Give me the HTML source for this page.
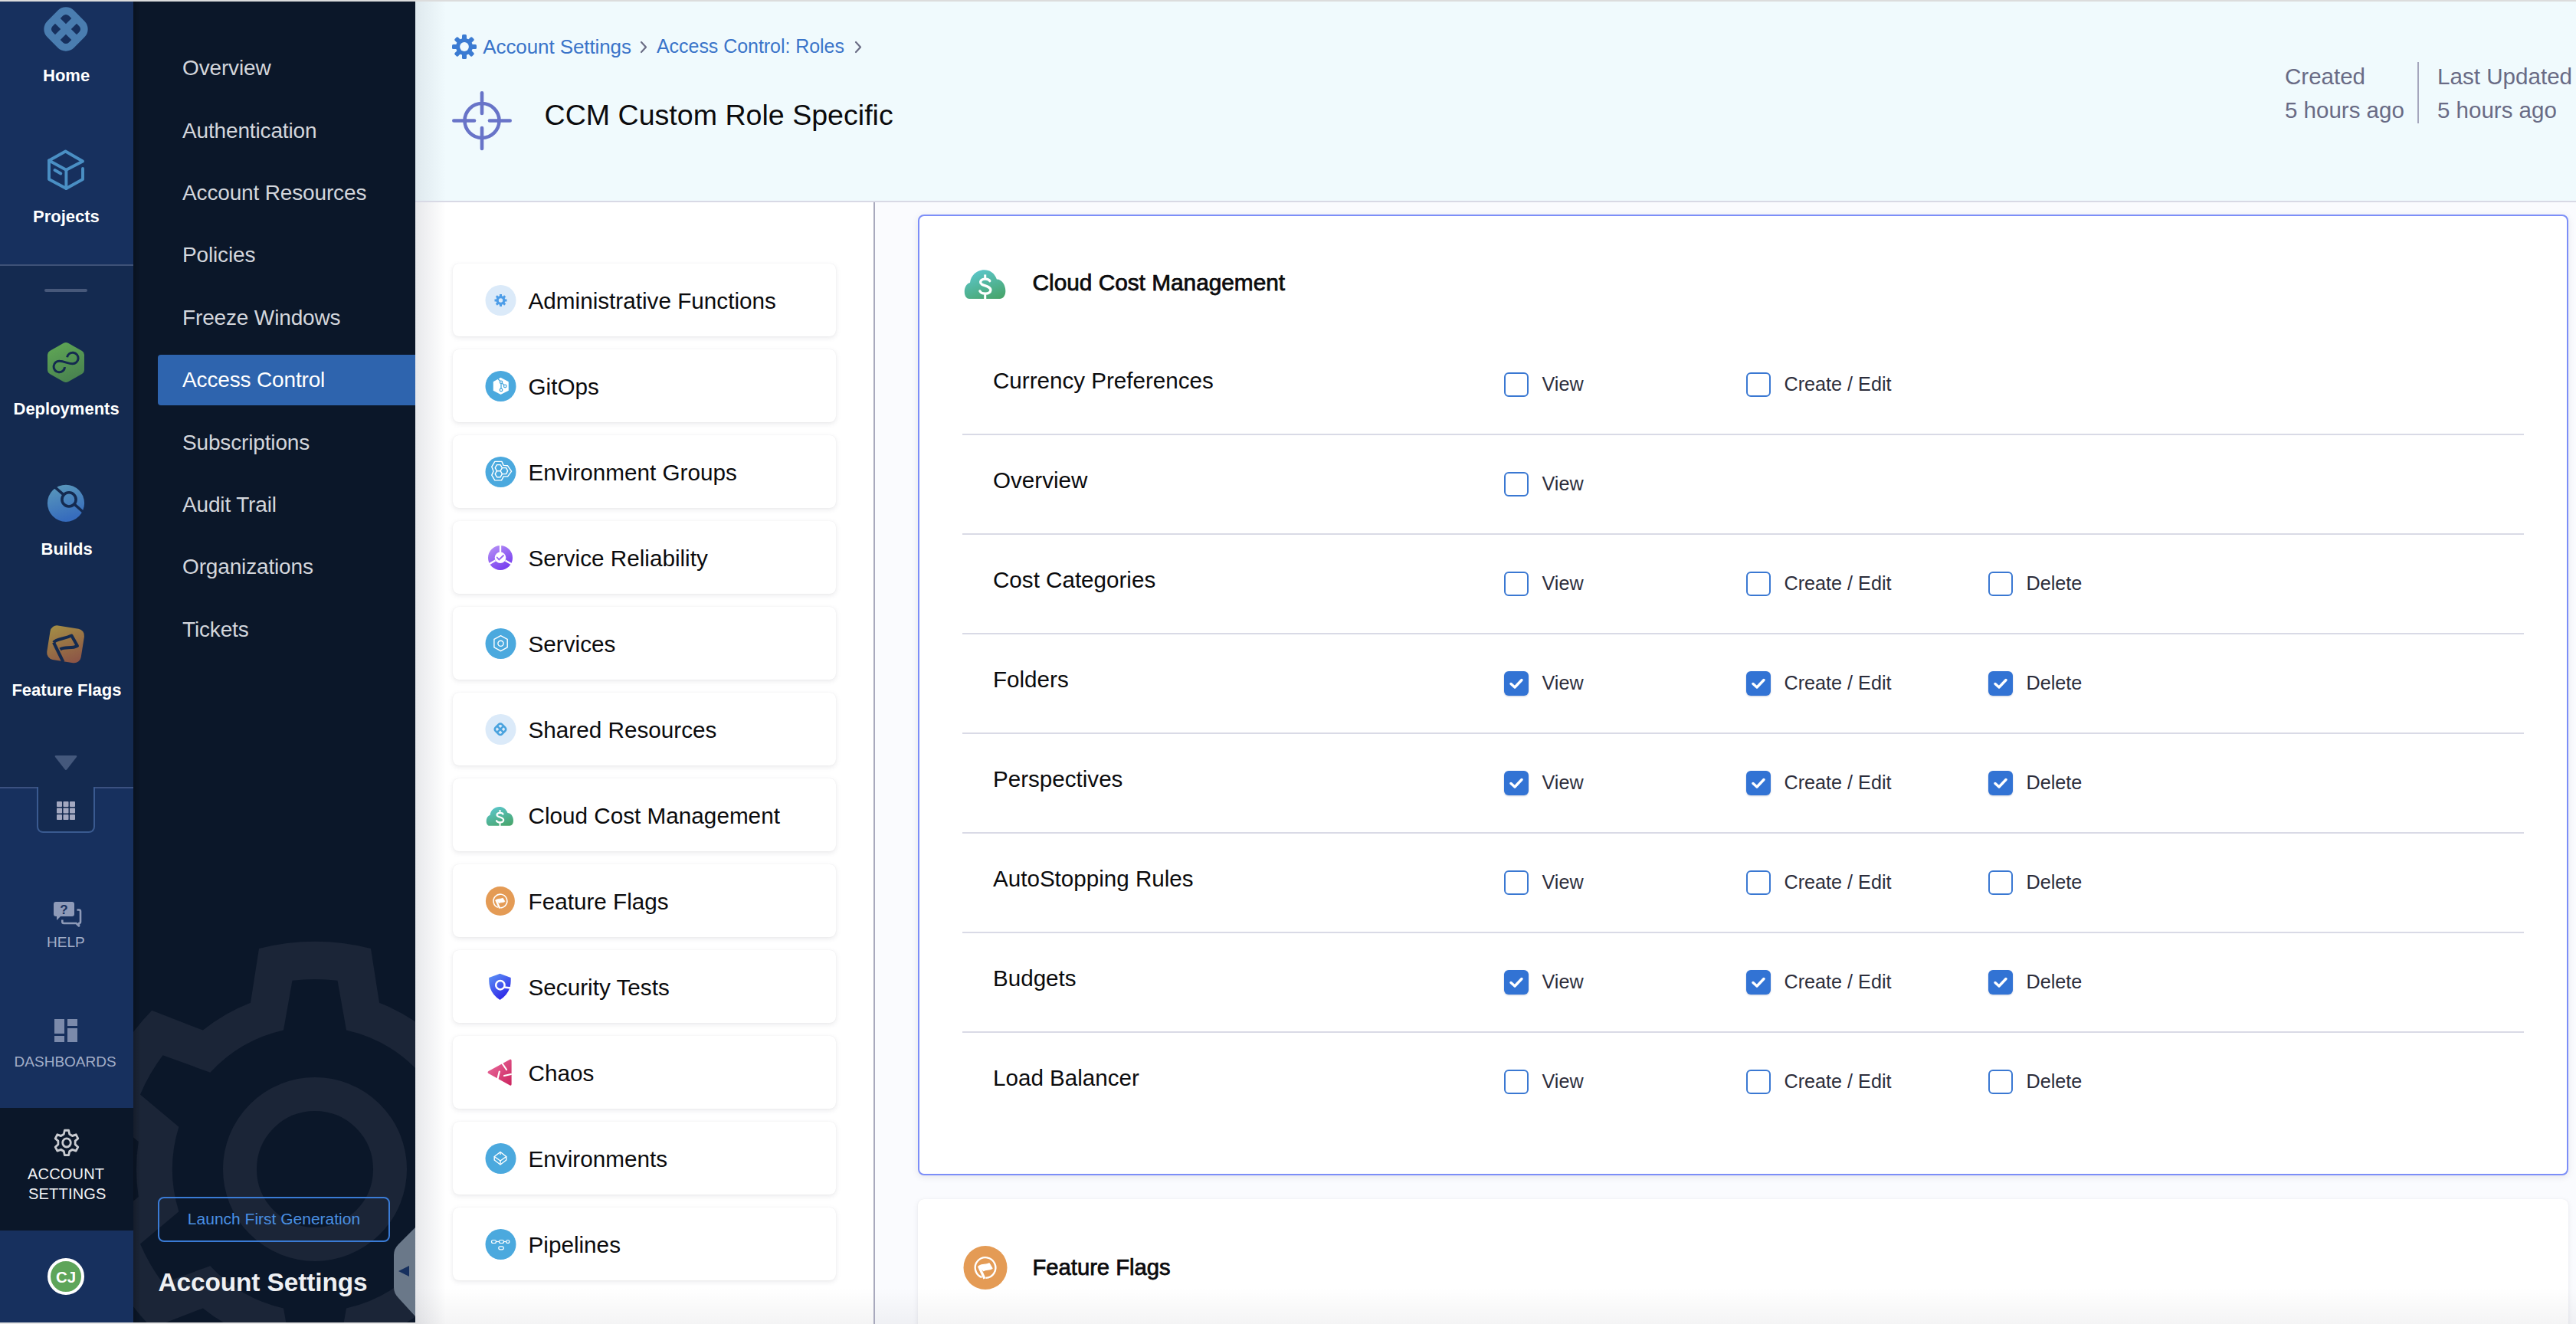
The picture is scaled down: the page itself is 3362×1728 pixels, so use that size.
<!DOCTYPE html>
<html><head><meta charset="utf-8"><title>CCM Custom Role Specific</title>
<style>
html,body{margin:0;padding:0;}
body{width:3362px;height:1728px;position:relative;overflow:hidden;background:#fff;font-family:"Liberation Sans",sans-serif;}
.t{position:absolute;white-space:nowrap;}
.r{position:absolute;display:block;}
</style></head><body>
<div class="r" style="left:542px;top:0px;width:2820px;height:262px;background:#f0fafd"></div>
<div class="r" style="left:542px;top:262px;width:2820px;height:2px;background:#d8d9e5"></div>
<svg class="r" style="left:590px;top:45px;" width="32" height="32" viewBox="0 0 32 32" ><g fill="#3b7bd2"><circle cx="16" cy="16" r="11"/><rect x="13" y="0" width="6" height="9" rx="1.6" transform="rotate(0 16 16)"/><rect x="13" y="0" width="6" height="9" rx="1.6" transform="rotate(45 16 16)"/><rect x="13" y="0" width="6" height="9" rx="1.6" transform="rotate(90 16 16)"/><rect x="13" y="0" width="6" height="9" rx="1.6" transform="rotate(135 16 16)"/><rect x="13" y="0" width="6" height="9" rx="1.6" transform="rotate(180 16 16)"/><rect x="13" y="0" width="6" height="9" rx="1.6" transform="rotate(225 16 16)"/><rect x="13" y="0" width="6" height="9" rx="1.6" transform="rotate(270 16 16)"/><rect x="13" y="0" width="6" height="9" rx="1.6" transform="rotate(315 16 16)"/></g><circle cx="16" cy="16" r="5.9" fill="#f0fafd"/></svg>
<div class="t " style="left:630.3px;top:47.5px;font-size:26px;line-height:26px;color:#3a74c9;font-weight:400;letter-spacing:-0.1px">Account Settings</div>
<svg class="r" style="left:835px;top:52.5px;" width="11" height="17" viewBox="0 0 11 17" ><path d="M2 2 L8 8.5 L2 15" fill="none" stroke="#6b6d85" stroke-width="2.2" stroke-linecap="round" stroke-linejoin="round"/></svg>
<div class="t " style="left:857.0px;top:48.3px;font-size:25px;line-height:25px;color:#3a74c9;font-weight:400;letter-spacing:-0.05px">Access Control: Roles</div>
<svg class="r" style="left:1115px;top:52.5px;" width="11" height="17" viewBox="0 0 11 17" ><path d="M2 2 L8 8.5 L2 15" fill="none" stroke="#6b6d85" stroke-width="2.2" stroke-linecap="round" stroke-linejoin="round"/></svg>
<svg class="r" style="left:590px;top:119px;" width="78" height="78" viewBox="0 0 78 78" ><g fill="none" stroke="#6874c8" stroke-width="4.6" stroke-linecap="round"><circle cx="39" cy="38.5" r="22.5"/><line x1="2.3" y1="38.5" x2="29" y2="38.5"/><line x1="49" y1="38.5" x2="75.7" y2="38.5"/><line x1="39" y1="2.3" x2="39" y2="29"/><line x1="39" y1="48" x2="39" y2="75"/></g></svg>
<div class="t " style="left:710.5px;top:132.2px;font-size:37.6px;line-height:37.6px;color:#0b0b0d;font-weight:400;">CCM Custom Role Specific</div>
<div class="t " style="left:2982.0px;top:85.0px;font-size:29.5px;line-height:29.5px;color:#696b85;font-weight:400;">Created</div>
<div class="t " style="left:2982.0px;top:128.5px;font-size:29.5px;line-height:29.5px;color:#696b85;font-weight:400;">5 hours ago</div>
<div class="r" style="left:3155px;top:81px;width:2px;height:80px;background:#a5a6bc"></div>
<div class="t " style="left:3181.0px;top:84.9px;font-size:29.6px;line-height:29.6px;color:#696b85;font-weight:400;">Last Updated</div>
<div class="t " style="left:3181.0px;top:128.5px;font-size:29.5px;line-height:29.5px;color:#696b85;font-weight:400;">5 hours ago</div>
<div class="r" style="left:542px;top:264px;width:598px;height:1464px;background:#fff"></div>
<div class="r" style="left:542px;top:264px;width:40px;height:1464px;background:linear-gradient(to right, rgba(20,30,60,0.10), rgba(20,30,60,0))"></div>
<div class="r" style="left:542px;top:0px;width:40px;height:262px;background:linear-gradient(to right, rgba(20,30,60,0.08), rgba(20,30,60,0))"></div>
<div class="r" style="left:591px;top:344px;width:500px;height:95px;background:#fff;border-radius:8px;box-shadow:0 0 1px rgba(40,41,61,0.10),0 2px 6px rgba(96,97,112,0.14)"></div>
<svg class="r" style="left:625px;top:363px;" width="60" height="60" viewBox="0 0 60 60" ><circle cx="28.5" cy="29" r="20" fill="#dbeaf9"/><g fill="#4d9de8"><circle cx="28.5" cy="29" r="6"/><rect x="27" y="21" width="3" height="4.5" transform="rotate(0 28.5 29)"/><rect x="27" y="21" width="3" height="4.5" transform="rotate(45 28.5 29)"/><rect x="27" y="21" width="3" height="4.5" transform="rotate(90 28.5 29)"/><rect x="27" y="21" width="3" height="4.5" transform="rotate(135 28.5 29)"/><rect x="27" y="21" width="3" height="4.5" transform="rotate(180 28.5 29)"/><rect x="27" y="21" width="3" height="4.5" transform="rotate(225 28.5 29)"/><rect x="27" y="21" width="3" height="4.5" transform="rotate(270 28.5 29)"/><rect x="27" y="21" width="3" height="4.5" transform="rotate(315 28.5 29)"/></g><circle cx="28.5" cy="29" r="2.7" fill="#dbeaf9"/></svg>
<div class="t " style="left:689.5px;top:377.7px;font-size:29.7px;line-height:29.7px;color:#0b0b0d;font-weight:400;">Administrative Functions</div>
<div class="r" style="left:591px;top:456px;width:500px;height:95px;background:#fff;border-radius:8px;box-shadow:0 0 1px rgba(40,41,61,0.10),0 2px 6px rgba(96,97,112,0.14)"></div>
<svg class="r" style="left:625px;top:475px;" width="60" height="60" viewBox="0 0 60 60" ><circle cx="28.5" cy="29" r="20" fill="#4ba9de"/><path d="M28.5 18.6 L38 23.6 L38 34.4 L28.5 39 L19.5 34.4 L19.5 23.6 Z" fill="#fff" stroke="#fff" stroke-width="1.5" stroke-linejoin="round"/><g stroke="#4ba9de" stroke-width="1.3" fill="#fff"><path d="M25 19.5 L29 23.8 L34.2 29 M29 23.8 L29 34" fill="none"/><circle cx="29" cy="23.8" r="1.7"/><circle cx="34.2" cy="29" r="1.8"/><circle cx="29" cy="34" r="1.8"/></g></svg>
<div class="t " style="left:689.5px;top:489.7px;font-size:29.7px;line-height:29.7px;color:#0b0b0d;font-weight:400;">GitOps</div>
<div class="r" style="left:591px;top:568px;width:500px;height:95px;background:#fff;border-radius:8px;box-shadow:0 0 1px rgba(40,41,61,0.10),0 2px 6px rgba(96,97,112,0.14)"></div>
<svg class="r" style="left:625px;top:587px;" width="60" height="60" viewBox="0 0 60 60" ><circle cx="28.5" cy="29" r="20" fill="#4ba9de"/><g fill="none" stroke="#fff" stroke-width="1.4" stroke-linejoin="round"><path d="M20.8 15.4 L29.9 15.4 L32.2 20.4 L37.6 20.8 L42.6 28.1 L37.6 34.9 L32.2 34.9 L29.5 39.9 L20.8 39.9 L16.8 33.1 L19 28.1 L16.8 22.2 Z"/><path d="M23.5 19.6 L28.1 19.6 L30.4 23.6 L28.1 27.6 L23.5 27.6 L21.2 23.6 Z"/><path d="M23.5 27.6 L28.1 27.6 L30.4 31.7 L28.1 35.7 L23.5 35.7 L21.2 31.7 Z"/><path d="M30.4 23.6 L35.6 23.6 L37.6 27.6 L35.6 31.6 L30.4 31.6"/></g></svg>
<div class="t " style="left:689.5px;top:601.7px;font-size:29.7px;line-height:29.7px;color:#0b0b0d;font-weight:400;">Environment Groups</div>
<div class="r" style="left:591px;top:680px;width:500px;height:95px;background:#fff;border-radius:8px;box-shadow:0 0 1px rgba(40,41,61,0.10),0 2px 6px rgba(96,97,112,0.14)"></div>
<svg class="r" style="left:625px;top:699px;" width="60" height="60" viewBox="0 0 60 60" ><defs><linearGradient id="gsrm" x1="0.2" y1="0" x2="0.8" y2="1"><stop offset="0" stop-color="#b48ef5"/><stop offset="1" stop-color="#7338ef"/></linearGradient></defs><circle cx="28" cy="29" r="16" fill="url(#gsrm)"/><circle cx="28" cy="28.8" r="7.3" fill="#fff"/><g stroke="#fff" stroke-width="2.4"><line x1="28" y1="11" x2="28" y2="22"/><line x1="21.5" y1="32.5" x2="12" y2="38"/><line x1="34.5" y1="32.5" x2="44" y2="38"/></g><path d="M23.7 28.5 L26.3 31.4 L32 26" fill="none" stroke="#9566f0" stroke-width="1.8" stroke-linecap="round"/></svg>
<div class="t " style="left:689.5px;top:713.7px;font-size:29.7px;line-height:29.7px;color:#0b0b0d;font-weight:400;">Service Reliability</div>
<div class="r" style="left:591px;top:792px;width:500px;height:95px;background:#fff;border-radius:8px;box-shadow:0 0 1px rgba(40,41,61,0.10),0 2px 6px rgba(96,97,112,0.14)"></div>
<svg class="r" style="left:625px;top:811px;" width="60" height="60" viewBox="0 0 60 60" ><circle cx="28.5" cy="29" r="20" fill="#4ba9de"/><g fill="none" stroke="#fff" stroke-width="1.4" stroke-linejoin="round"><path d="M28.5 18.6 L37.2 23.3 L37.2 33.8 L28.5 38.7 L19.9 33.8 L19.9 23.3 Z"/><circle cx="28.5" cy="28.8" r="3.6"/></g></svg>
<div class="t " style="left:689.5px;top:825.7px;font-size:29.7px;line-height:29.7px;color:#0b0b0d;font-weight:400;">Services</div>
<div class="r" style="left:591px;top:904px;width:500px;height:95px;background:#fff;border-radius:8px;box-shadow:0 0 1px rgba(40,41,61,0.10),0 2px 6px rgba(96,97,112,0.14)"></div>
<svg class="r" style="left:625px;top:923px;" width="60" height="60" viewBox="0 0 60 60" ><circle cx="28.5" cy="29" r="20" fill="#dbeaf9"/><g transform="rotate(45 28 28.8)" fill="none" stroke="#4aa3de" stroke-width="2.6"><rect x="22" y="22.8" width="12" height="12" rx="3"/><line x1="28" y1="22.5" x2="28" y2="35"/><line x1="21.8" y1="28.8" x2="34.2" y2="28.8"/></g></svg>
<div class="t " style="left:689.5px;top:937.7px;font-size:29.7px;line-height:29.7px;color:#0b0b0d;font-weight:400;">Shared Resources</div>
<div class="r" style="left:591px;top:1016px;width:500px;height:95px;background:#fff;border-radius:8px;box-shadow:0 0 1px rgba(40,41,61,0.10),0 2px 6px rgba(96,97,112,0.14)"></div>
<svg class="r" style="left:625px;top:1035px;" width="60" height="60" viewBox="0 0 60 60" ><defs><linearGradient id="gccm" x1="0.3" y1="0" x2="0.8" y2="1"><stop offset="0" stop-color="#5bc6ca"/><stop offset="1" stop-color="#48a56c"/></linearGradient></defs><path d="M14 42.8 C8 42.8 8.5 30 14.5 29 C15.5 17 33 13 37.5 26 C46 26 48 42.8 40 42.8 Z" fill="url(#gccm)"/><path d="M31.5 27.5 C30.5 25.2 24 25 23.5 28.3 C23 32 32.8 31.2 32.2 35.6 C31.6 39.3 24.2 39 23 36.2" fill="none" stroke="#fff" stroke-width="2.2" stroke-linecap="round"/><line x1="27.5" y1="22" x2="27.5" y2="25.5" stroke="#fff" stroke-width="2"/><line x1="27.5" y1="39" x2="27.5" y2="43" stroke="#fff" stroke-width="2"/></svg>
<div class="t " style="left:689.5px;top:1049.7px;font-size:29.7px;line-height:29.7px;color:#0b0b0d;font-weight:400;">Cloud Cost Management</div>
<div class="r" style="left:591px;top:1128px;width:500px;height:95px;background:#fff;border-radius:8px;box-shadow:0 0 1px rgba(40,41,61,0.10),0 2px 6px rgba(96,97,112,0.14)"></div>
<svg class="r" style="left:625px;top:1147px;" width="60" height="60" viewBox="0 0 60 60" ><circle cx="27.9" cy="29" r="19.0" fill="#e49b55"/><path d="M24.86 37.36 A8.90 8.90 0 1 1 28.21 37.89" fill="none" stroke="#fff" stroke-width="1.60"/><path d="M22.20 27.60 C25.00 25.50 28.00 27.00 31.30 25.20 L33.90 29.60 C31.00 31.50 28.50 30.00 26.30 31.80 Z" fill="#fff" stroke="#fff" stroke-width="0.80" stroke-linejoin="round"/><path d="M22.20 27.60 L27.20 38.60" stroke="#fff" stroke-width="2.30"/></svg>
<div class="t " style="left:689.5px;top:1161.7px;font-size:29.7px;line-height:29.7px;color:#0b0b0d;font-weight:400;">Feature Flags</div>
<div class="r" style="left:591px;top:1240px;width:500px;height:95px;background:#fff;border-radius:8px;box-shadow:0 0 1px rgba(40,41,61,0.10),0 2px 6px rgba(96,97,112,0.14)"></div>
<svg class="r" style="left:625px;top:1259px;" width="60" height="60" viewBox="0 0 60 60" ><defs><linearGradient id="gsto" x1="0.2" y1="0" x2="0.8" y2="1"><stop offset="0" stop-color="#5a8ef5"/><stop offset="1" stop-color="#2a1ce6"/></linearGradient></defs><path d="M27.5 11.8 L41.7 17 Q42 26 40 31 Q37 40 27.5 46 Q18 40 15 31 Q13 26 13.2 17 Z" fill="url(#gsto)"/><circle cx="27.9" cy="26.7" r="5.7" fill="none" stroke="#fff" stroke-width="2.5"/><line x1="33" y1="29.5" x2="42" y2="30.5" stroke="#fff" stroke-width="2.5"/></svg>
<div class="t " style="left:689.5px;top:1273.7px;font-size:29.7px;line-height:29.7px;color:#0b0b0d;font-weight:400;">Security Tests</div>
<div class="r" style="left:591px;top:1352px;width:500px;height:95px;background:#fff;border-radius:8px;box-shadow:0 0 1px rgba(40,41,61,0.10),0 2px 6px rgba(96,97,112,0.14)"></div>
<svg class="r" style="left:625px;top:1371px;" width="60" height="60" viewBox="0 0 60 60" ><defs><linearGradient id="gch" x1="0" y1="0" x2="1" y2="1"><stop offset="0" stop-color="#ea6fa0"/><stop offset="1" stop-color="#cc245e"/></linearGradient></defs><path d="M12.5 27 L40.5 11.8 Q42.6 11 42.6 13.5 L42.6 44 Q42.6 46.5 40.5 45.5 L12.5 30 Q10.5 28.5 12.5 27 Z" fill="url(#gch)"/><g stroke="#fff" stroke-width="2.2" stroke-linecap="round"><line x1="30.5" y1="17" x2="36" y2="25"/><line x1="26.8" y1="27.5" x2="24.5" y2="37"/><line x1="33" y1="33" x2="42" y2="31"/></g></svg>
<div class="t " style="left:689.5px;top:1385.7px;font-size:29.7px;line-height:29.7px;color:#0b0b0d;font-weight:400;">Chaos</div>
<div class="r" style="left:591px;top:1464px;width:500px;height:95px;background:#fff;border-radius:8px;box-shadow:0 0 1px rgba(40,41,61,0.10),0 2px 6px rgba(96,97,112,0.14)"></div>
<svg class="r" style="left:625px;top:1483px;" width="60" height="60" viewBox="0 0 60 60" ><circle cx="28.5" cy="29" r="20" fill="#4ba9de"/><g fill="none" stroke="#fff" stroke-width="1.4" stroke-linejoin="round"><path d="M28 20.5 L35.8 26.5 L28 32 L20.2 26.5 Z"/><path d="M20.2 26.5 L20.2 31 L28 37 L35.8 31 L35.8 26.5"/><line x1="28" y1="32" x2="28" y2="37"/><line x1="28" y1="20.5" x2="28" y2="24"/></g></svg>
<div class="t " style="left:689.5px;top:1497.7px;font-size:29.7px;line-height:29.7px;color:#0b0b0d;font-weight:400;">Environments</div>
<div class="r" style="left:591px;top:1576px;width:500px;height:95px;background:#fff;border-radius:8px;box-shadow:0 0 1px rgba(40,41,61,0.10),0 2px 6px rgba(96,97,112,0.14)"></div>
<svg class="r" style="left:625px;top:1595px;" width="60" height="60" viewBox="0 0 60 60" ><circle cx="28.5" cy="29" r="20" fill="#4ba9de"/><g fill="none" stroke="#fff" stroke-width="1.2"><rect x="16.5" y="23.5" width="6" height="4" rx="2"/><rect x="26.5" y="23.5" width="6" height="4" rx="2"/><rect x="35.8" y="23.5" width="4" height="4" rx="2"/><rect x="25.8" y="31.8" width="6.5" height="4" rx="2"/><line x1="22.5" y1="25.5" x2="26.5" y2="25.5"/><line x1="32.5" y1="25.5" x2="35.8" y2="25.5"/></g></svg>
<div class="t " style="left:689.5px;top:1609.7px;font-size:29.7px;line-height:29.7px;color:#0b0b0d;font-weight:400;">Pipelines</div>
<div class="r" style="left:1140px;top:264px;width:2px;height:1464px;background:#a8a9bd"></div>
<div class="r" style="left:1142px;top:264px;width:2220px;height:1464px;background:#fafbfe"></div>
<div class="r" style="left:1198px;top:280px;width:2154px;height:1254px;box-sizing:border-box;background:#fff;border:2px solid #7c8ef8;border-radius:8px;box-shadow:0 2px 8px rgba(96,97,112,0.14)"></div>
<svg class="r" style="left:1244px;top:325px;" width="91" height="91" viewBox="0 0 60 60" ><defs><linearGradient id="gccm2" x1="0.3" y1="0" x2="0.8" y2="1"><stop offset="0" stop-color="#5bc6ca"/><stop offset="1" stop-color="#48a56c"/></linearGradient></defs><path d="M14 42.8 C8 42.8 8.5 30 14.5 29 C15.5 17 33 13 37.5 26 C46 26 48 42.8 40 42.8 Z" fill="url(#gccm2)"/><path d="M31.5 27.5 C30.5 25.2 24 25 23.5 28.3 C23 32 32.8 31.2 32.2 35.6 C31.6 39.3 24.2 39 23 36.2" fill="none" stroke="#fff" stroke-width="2.2" stroke-linecap="round"/><line x1="27.5" y1="22" x2="27.5" y2="25.5" stroke="#fff" stroke-width="2"/><line x1="27.5" y1="39" x2="27.5" y2="43" stroke="#fff" stroke-width="2"/></svg>
<div class="t " style="left:1347.5px;top:353.8px;font-size:29.8px;line-height:29.8px;color:#0b0b0d;font-weight:400;-webkit-text-stroke:0.75px #0b0b0d">Cloud Cost Management</div>
<div class="t " style="left:1296.0px;top:482.0px;font-size:29.6px;line-height:29.6px;color:#0b0b0d;font-weight:400;">Currency Preferences</div>
<div class="r" style="left:1963px;top:486px;width:32px;height:32px;box-sizing:border-box;background:#fff;border:2px solid #3a78d2;border-radius:6px"></div>
<div class="t " style="left:2012.5px;top:489.3px;font-size:25.2px;line-height:25.2px;color:#2c2d3b;font-weight:400;">View</div>
<div class="r" style="left:2279px;top:486px;width:32px;height:32px;box-sizing:border-box;background:#fff;border:2px solid #3a78d2;border-radius:6px"></div>
<div class="t " style="left:2328.5px;top:489.3px;font-size:25.2px;line-height:25.2px;color:#2c2d3b;font-weight:400;">Create / Edit</div>
<div class="r" style="left:1256px;top:566px;width:2038px;height:2px;background:#d9dae6"></div>
<div class="t " style="left:1296.0px;top:612.0px;font-size:29.6px;line-height:29.6px;color:#0b0b0d;font-weight:400;">Overview</div>
<div class="r" style="left:1963px;top:616px;width:32px;height:32px;box-sizing:border-box;background:#fff;border:2px solid #3a78d2;border-radius:6px"></div>
<div class="t " style="left:2012.5px;top:619.3px;font-size:25.2px;line-height:25.2px;color:#2c2d3b;font-weight:400;">View</div>
<div class="r" style="left:1256px;top:696px;width:2038px;height:2px;background:#d9dae6"></div>
<div class="t " style="left:1296.0px;top:742.0px;font-size:29.6px;line-height:29.6px;color:#0b0b0d;font-weight:400;">Cost Categories</div>
<div class="r" style="left:1963px;top:746px;width:32px;height:32px;box-sizing:border-box;background:#fff;border:2px solid #3a78d2;border-radius:6px"></div>
<div class="t " style="left:2012.5px;top:749.3px;font-size:25.2px;line-height:25.2px;color:#2c2d3b;font-weight:400;">View</div>
<div class="r" style="left:2279px;top:746px;width:32px;height:32px;box-sizing:border-box;background:#fff;border:2px solid #3a78d2;border-radius:6px"></div>
<div class="t " style="left:2328.5px;top:749.3px;font-size:25.2px;line-height:25.2px;color:#2c2d3b;font-weight:400;">Create / Edit</div>
<div class="r" style="left:2595px;top:746px;width:32px;height:32px;box-sizing:border-box;background:#fff;border:2px solid #3a78d2;border-radius:6px"></div>
<div class="t " style="left:2644.5px;top:749.3px;font-size:25.2px;line-height:25.2px;color:#2c2d3b;font-weight:400;">Delete</div>
<div class="r" style="left:1256px;top:826px;width:2038px;height:2px;background:#d9dae6"></div>
<div class="t " style="left:1296.0px;top:872.0px;font-size:29.6px;line-height:29.6px;color:#0b0b0d;font-weight:400;">Folders</div>
<div class="r" style="left:1963px;top:876px;width:32px;height:32px;box-sizing:border-box;background:#3273d4;border-radius:6px;box-shadow:0 1px 2px rgba(40,60,120,0.25)"></div>
<svg class="r" style="left:1963px;top:876px;" width="32" height="32" viewBox="0 0 32 32" ><path d="M9 16.5 L14 21 L23 11.5" fill="none" stroke="#fff" stroke-width="3.4" stroke-linecap="round" stroke-linejoin="round"/></svg>
<div class="t " style="left:2012.5px;top:879.3px;font-size:25.2px;line-height:25.2px;color:#2c2d3b;font-weight:400;">View</div>
<div class="r" style="left:2279px;top:876px;width:32px;height:32px;box-sizing:border-box;background:#3273d4;border-radius:6px;box-shadow:0 1px 2px rgba(40,60,120,0.25)"></div>
<svg class="r" style="left:2279px;top:876px;" width="32" height="32" viewBox="0 0 32 32" ><path d="M9 16.5 L14 21 L23 11.5" fill="none" stroke="#fff" stroke-width="3.4" stroke-linecap="round" stroke-linejoin="round"/></svg>
<div class="t " style="left:2328.5px;top:879.3px;font-size:25.2px;line-height:25.2px;color:#2c2d3b;font-weight:400;">Create / Edit</div>
<div class="r" style="left:2595px;top:876px;width:32px;height:32px;box-sizing:border-box;background:#3273d4;border-radius:6px;box-shadow:0 1px 2px rgba(40,60,120,0.25)"></div>
<svg class="r" style="left:2595px;top:876px;" width="32" height="32" viewBox="0 0 32 32" ><path d="M9 16.5 L14 21 L23 11.5" fill="none" stroke="#fff" stroke-width="3.4" stroke-linecap="round" stroke-linejoin="round"/></svg>
<div class="t " style="left:2644.5px;top:879.3px;font-size:25.2px;line-height:25.2px;color:#2c2d3b;font-weight:400;">Delete</div>
<div class="r" style="left:1256px;top:956px;width:2038px;height:2px;background:#d9dae6"></div>
<div class="t " style="left:1296.0px;top:1002.0px;font-size:29.6px;line-height:29.6px;color:#0b0b0d;font-weight:400;">Perspectives</div>
<div class="r" style="left:1963px;top:1006px;width:32px;height:32px;box-sizing:border-box;background:#3273d4;border-radius:6px;box-shadow:0 1px 2px rgba(40,60,120,0.25)"></div>
<svg class="r" style="left:1963px;top:1006px;" width="32" height="32" viewBox="0 0 32 32" ><path d="M9 16.5 L14 21 L23 11.5" fill="none" stroke="#fff" stroke-width="3.4" stroke-linecap="round" stroke-linejoin="round"/></svg>
<div class="t " style="left:2012.5px;top:1009.3px;font-size:25.2px;line-height:25.2px;color:#2c2d3b;font-weight:400;">View</div>
<div class="r" style="left:2279px;top:1006px;width:32px;height:32px;box-sizing:border-box;background:#3273d4;border-radius:6px;box-shadow:0 1px 2px rgba(40,60,120,0.25)"></div>
<svg class="r" style="left:2279px;top:1006px;" width="32" height="32" viewBox="0 0 32 32" ><path d="M9 16.5 L14 21 L23 11.5" fill="none" stroke="#fff" stroke-width="3.4" stroke-linecap="round" stroke-linejoin="round"/></svg>
<div class="t " style="left:2328.5px;top:1009.3px;font-size:25.2px;line-height:25.2px;color:#2c2d3b;font-weight:400;">Create / Edit</div>
<div class="r" style="left:2595px;top:1006px;width:32px;height:32px;box-sizing:border-box;background:#3273d4;border-radius:6px;box-shadow:0 1px 2px rgba(40,60,120,0.25)"></div>
<svg class="r" style="left:2595px;top:1006px;" width="32" height="32" viewBox="0 0 32 32" ><path d="M9 16.5 L14 21 L23 11.5" fill="none" stroke="#fff" stroke-width="3.4" stroke-linecap="round" stroke-linejoin="round"/></svg>
<div class="t " style="left:2644.5px;top:1009.3px;font-size:25.2px;line-height:25.2px;color:#2c2d3b;font-weight:400;">Delete</div>
<div class="r" style="left:1256px;top:1086px;width:2038px;height:2px;background:#d9dae6"></div>
<div class="t " style="left:1296.0px;top:1132.0px;font-size:29.6px;line-height:29.6px;color:#0b0b0d;font-weight:400;">AutoStopping Rules</div>
<div class="r" style="left:1963px;top:1136px;width:32px;height:32px;box-sizing:border-box;background:#fff;border:2px solid #3a78d2;border-radius:6px"></div>
<div class="t " style="left:2012.5px;top:1139.3px;font-size:25.2px;line-height:25.2px;color:#2c2d3b;font-weight:400;">View</div>
<div class="r" style="left:2279px;top:1136px;width:32px;height:32px;box-sizing:border-box;background:#fff;border:2px solid #3a78d2;border-radius:6px"></div>
<div class="t " style="left:2328.5px;top:1139.3px;font-size:25.2px;line-height:25.2px;color:#2c2d3b;font-weight:400;">Create / Edit</div>
<div class="r" style="left:2595px;top:1136px;width:32px;height:32px;box-sizing:border-box;background:#fff;border:2px solid #3a78d2;border-radius:6px"></div>
<div class="t " style="left:2644.5px;top:1139.3px;font-size:25.2px;line-height:25.2px;color:#2c2d3b;font-weight:400;">Delete</div>
<div class="r" style="left:1256px;top:1216px;width:2038px;height:2px;background:#d9dae6"></div>
<div class="t " style="left:1296.0px;top:1262.0px;font-size:29.6px;line-height:29.6px;color:#0b0b0d;font-weight:400;">Budgets</div>
<div class="r" style="left:1963px;top:1266px;width:32px;height:32px;box-sizing:border-box;background:#3273d4;border-radius:6px;box-shadow:0 1px 2px rgba(40,60,120,0.25)"></div>
<svg class="r" style="left:1963px;top:1266px;" width="32" height="32" viewBox="0 0 32 32" ><path d="M9 16.5 L14 21 L23 11.5" fill="none" stroke="#fff" stroke-width="3.4" stroke-linecap="round" stroke-linejoin="round"/></svg>
<div class="t " style="left:2012.5px;top:1269.3px;font-size:25.2px;line-height:25.2px;color:#2c2d3b;font-weight:400;">View</div>
<div class="r" style="left:2279px;top:1266px;width:32px;height:32px;box-sizing:border-box;background:#3273d4;border-radius:6px;box-shadow:0 1px 2px rgba(40,60,120,0.25)"></div>
<svg class="r" style="left:2279px;top:1266px;" width="32" height="32" viewBox="0 0 32 32" ><path d="M9 16.5 L14 21 L23 11.5" fill="none" stroke="#fff" stroke-width="3.4" stroke-linecap="round" stroke-linejoin="round"/></svg>
<div class="t " style="left:2328.5px;top:1269.3px;font-size:25.2px;line-height:25.2px;color:#2c2d3b;font-weight:400;">Create / Edit</div>
<div class="r" style="left:2595px;top:1266px;width:32px;height:32px;box-sizing:border-box;background:#3273d4;border-radius:6px;box-shadow:0 1px 2px rgba(40,60,120,0.25)"></div>
<svg class="r" style="left:2595px;top:1266px;" width="32" height="32" viewBox="0 0 32 32" ><path d="M9 16.5 L14 21 L23 11.5" fill="none" stroke="#fff" stroke-width="3.4" stroke-linecap="round" stroke-linejoin="round"/></svg>
<div class="t " style="left:2644.5px;top:1269.3px;font-size:25.2px;line-height:25.2px;color:#2c2d3b;font-weight:400;">Delete</div>
<div class="r" style="left:1256px;top:1346px;width:2038px;height:2px;background:#d9dae6"></div>
<div class="t " style="left:1296.0px;top:1392.0px;font-size:29.6px;line-height:29.6px;color:#0b0b0d;font-weight:400;">Load Balancer</div>
<div class="r" style="left:1963px;top:1396px;width:32px;height:32px;box-sizing:border-box;background:#fff;border:2px solid #3a78d2;border-radius:6px"></div>
<div class="t " style="left:2012.5px;top:1399.3px;font-size:25.2px;line-height:25.2px;color:#2c2d3b;font-weight:400;">View</div>
<div class="r" style="left:2279px;top:1396px;width:32px;height:32px;box-sizing:border-box;background:#fff;border:2px solid #3a78d2;border-radius:6px"></div>
<div class="t " style="left:2328.5px;top:1399.3px;font-size:25.2px;line-height:25.2px;color:#2c2d3b;font-weight:400;">Create / Edit</div>
<div class="r" style="left:2595px;top:1396px;width:32px;height:32px;box-sizing:border-box;background:#fff;border:2px solid #3a78d2;border-radius:6px"></div>
<div class="t " style="left:2644.5px;top:1399.3px;font-size:25.2px;line-height:25.2px;color:#2c2d3b;font-weight:400;">Delete</div>
<div class="r" style="left:1198px;top:1565px;width:2154px;height:300px;background:#fff;border-radius:8px;box-shadow:0 0 1px rgba(40,41,61,0.10),0 2px 6px rgba(96,97,112,0.12)"></div>
<svg class="r" style="left:1256px;top:1626px;" width="60" height="60" viewBox="0 0 60 60" ><circle cx="30" cy="28.5" r="28.5" fill="#e49b55"/><path d="M25.43 41.04 A13.35 13.35 0 1 1 30.47 41.84" fill="none" stroke="#fff" stroke-width="2.40"/><path d="M21.45 26.40 C25.65 23.25 30.15 25.50 35.10 22.80 L39.00 29.40 C34.65 32.25 30.90 30.00 27.60 32.70 Z" fill="#fff" stroke="#fff" stroke-width="1.20" stroke-linejoin="round"/><path d="M21.45 26.40 L28.95 42.90" stroke="#fff" stroke-width="3.45"/></svg>
<div class="t " style="left:1347.5px;top:1639.8px;font-size:29.2px;line-height:29.2px;color:#0b0b0d;font-weight:400;-webkit-text-stroke:0.75px #0b0b0d">Feature Flags</div>
<div class="r" style="left:542px;top:1680px;width:2820px;height:48px;background:linear-gradient(to bottom, rgba(0,0,20,0), rgba(0,0,20,0.045))"></div>
<div class="r" style="left:1140px;top:264px;width:2px;height:1464px;background:#a8a9bd"></div>
<div class="r" style="left:174px;top:0px;width:368px;height:1728px;background:#0b1729;overflow:hidden"></div>
<svg class="r" style="left:174px;top:0px;" width="368" height="1728" viewBox="174 0 368 1728" ><path d="M495.0 1308.7 L484.0 1238.1 A297 297 0 0 0 338.0 1238.1 L327.0 1308.7 A233 233 0 0 0 264.8 1344.6 L198.2 1318.8 A297 297 0 0 0 125.2 1445.3 L180.8 1490.1 A233 233 0 0 0 180.8 1561.9 L125.2 1606.7 A297 297 0 0 0 198.2 1733.2 L264.8 1707.4 A233 233 0 0 0 327.0 1743.3 L338.0 1813.9 A297 297 0 0 0 484.0 1813.9 L495.0 1743.3 A233 233 0 0 0 557.2 1707.4 L623.8 1733.2 A297 297 0 0 0 696.8 1606.7 L641.2 1561.9 A233 233 0 0 0 641.2 1490.1 L696.8 1445.3 A297 297 0 0 0 623.8 1318.8 L557.2 1344.6 A233 233 0 0 0 495.0 1308.7 Z M452.0 1344.6 L440.5 1279.8 A248 248 0 0 0 381.5 1279.8 L370.0 1344.6 A186 186 0 0 0 274.4 1399.8 L212.5 1377.3 A248 248 0 0 0 183.0 1428.4 L233.4 1470.8 A186 186 0 0 0 233.4 1581.2 L183.0 1623.6 A248 248 0 0 0 212.5 1674.7 L274.4 1652.2 A186 186 0 0 0 370.0 1707.4 L381.5 1772.2 A248 248 0 0 0 440.5 1772.2 L452.0 1707.4 A186 186 0 0 0 547.6 1652.2 L609.5 1674.7 A248 248 0 0 0 639.0 1623.6 L588.6 1581.2 A186 186 0 0 0 588.6 1470.8 L639.0 1428.4 A248 248 0 0 0 609.5 1377.3 L547.6 1399.8 A186 186 0 0 0 452.0 1344.6 Z" fill="#1b2537" fill-rule="evenodd"/><circle cx="411" cy="1526" r="98" fill="none" stroke="#1b2537" stroke-width="44"/></svg>
<div class="r" style="left:206px;top:463px;width:336px;height:66px;background:#2e64ae;border-radius:4px 0 0 4px"></div>
<div class="t " style="left:238.0px;top:75.1px;font-size:28px;line-height:28px;color:#d3d6dc;font-weight:400;letter-spacing:-0.15px">Overview</div>
<div class="t " style="left:238.0px;top:156.5px;font-size:28px;line-height:28px;color:#d3d6dc;font-weight:400;letter-spacing:-0.15px">Authentication</div>
<div class="t " style="left:238.0px;top:237.9px;font-size:28px;line-height:28px;color:#d3d6dc;font-weight:400;letter-spacing:-0.15px">Account Resources</div>
<div class="t " style="left:238.0px;top:319.3px;font-size:28px;line-height:28px;color:#d3d6dc;font-weight:400;letter-spacing:-0.15px">Policies</div>
<div class="t " style="left:238.0px;top:400.7px;font-size:28px;line-height:28px;color:#d3d6dc;font-weight:400;letter-spacing:-0.15px">Freeze Windows</div>
<div class="t " style="left:238.0px;top:482.1px;font-size:28px;line-height:28px;color:#fff;font-weight:400;letter-spacing:-0.15px">Access Control</div>
<div class="t " style="left:238.0px;top:563.5px;font-size:28px;line-height:28px;color:#d3d6dc;font-weight:400;letter-spacing:-0.15px">Subscriptions</div>
<div class="t " style="left:238.0px;top:644.9px;font-size:28px;line-height:28px;color:#d3d6dc;font-weight:400;letter-spacing:-0.15px">Audit Trail</div>
<div class="t " style="left:238.0px;top:726.3px;font-size:28px;line-height:28px;color:#d3d6dc;font-weight:400;letter-spacing:-0.15px">Organizations</div>
<div class="t " style="left:238.0px;top:807.7px;font-size:28px;line-height:28px;color:#d3d6dc;font-weight:400;letter-spacing:-0.15px">Tickets</div>
<div class="r" style="left:174px;top:0px;width:10px;height:1728px;background:linear-gradient(to right, rgba(0,0,0,0.22), rgba(0,0,0,0))"></div>
<div class="r" style="left:206px;top:1562px;width:303px;height:58.5px;box-sizing:border-box;border:2px solid #3a7bd5;border-radius:8px"></div>
<div class="t " style="left:206.0px;top:1579.7px;font-size:21px;line-height:21px;color:#4a90e2;font-weight:400;width:303px;text-align:center">Launch First Generation</div>
<div class="t " style="left:206.5px;top:1656.7px;font-size:33.4px;line-height:33.4px;color:#eef0f3;font-weight:700;letter-spacing:-0.1px">Account Settings</div>
<svg class="r" style="left:512px;top:1600px;" width="30" height="120" viewBox="0 0 30 120" ><path d="M30 2 L8 24 Q2 30 2 38 L2 80 Q2 88 8 94 L30 118 Z" fill="#6a7889"/><path d="M8 59 L22 52 L22 66 Z" fill="#17305e"/></svg>
<div class="r" style="left:0px;top:0px;width:174px;height:347px;background:#17305e"></div>
<div class="r" style="left:0px;top:345px;width:174px;height:2px;background:#3f5278"></div>
<div class="r" style="left:0px;top:347px;width:174px;height:680px;background:#142a50"></div>
<div class="r" style="left:0px;top:1027px;width:174px;height:2px;background:#3b5180"></div>
<div class="r" style="left:0px;top:1029px;width:174px;height:417px;background:#17305e"></div>
<div class="r" style="left:0px;top:1446px;width:174px;height:160px;background:#0b1729"></div>
<div class="r" style="left:0px;top:1606px;width:174px;height:122px;background:#17305e"></div>
<svg class="r" style="left:51.5px;top:4px;" width="68" height="68" viewBox="0 0 60 60" ><g transform="rotate(45 30 30)" fill="none" stroke="#4a7db0" stroke-width="8.5"><rect x="12.5" y="12.5" width="35" height="35" rx="9"/><line x1="30" y1="12" x2="30" y2="48"/><line x1="12" y1="30" x2="48" y2="30"/></g></svg>
<div class="t " style="left:56.0px;top:87.9px;font-size:22px;line-height:22px;color:#fff;font-weight:700;width:61px;text-align:center">Home</div>
<svg class="r" style="left:56px;top:190px;" width="60" height="64" viewBox="0 0 60 64" ><g fill="none" stroke="#4a8fc4" stroke-width="3.9" stroke-linejoin="round" stroke-linecap="round"><path d="M8 19.5 L29.5 7.5 L52 20.5 L30.4 31.8 Z"/><path d="M8 19.5 L8 44 L30.4 56 L30.4 31.8"/><path d="M52 30 L52 44 L30.4 56"/><path d="M15.5 32 L23.3 36.5"/></g></svg>
<div class="t " style="left:43.0px;top:272.2px;font-size:22px;line-height:22px;color:#fff;font-weight:700;">Projects</div>
<div class="r" style="left:58px;top:377px;width:56px;height:4px;background:#47587a;border-radius:2px"></div>
<svg class="r" style="left:62px;top:446px;" width="48" height="54" viewBox="0 0 48 54" ><defs><linearGradient id="gdep" x1="0" y1="0" x2="0.4" y2="1"><stop offset="0" stop-color="#61a955"/><stop offset="1" stop-color="#4a8450"/></linearGradient></defs><path d="M21 1.8 Q24 0.2 27 1.8 L45 12 Q48 13.8 48 17 L48 37 Q48 40.2 45 42 L27 52.2 Q24 53.8 21 52.2 L3 42 Q0 40.2 0 37 L0 17 Q0 13.8 3 12 Z" fill="url(#gdep)"/><path d="M25.6 20.3 A7.3 7.3 0 1 1 32.5 28.8 C 27 28.8, 22 25.5, 16 25.3 A7.3 7.3 0 1 0 22.6 33.2" fill="none" stroke="#142a50" stroke-width="3" /></svg>
<div class="t " style="left:17.5px;top:522.8px;font-size:22px;line-height:22px;color:#fff;font-weight:700;">Deployments</div>
<svg class="r" style="left:56px;top:626px;" width="60" height="60" viewBox="0 0 60 60" ><defs><linearGradient id="gbld" x1="0" y1="0" x2="0.3" y2="1"><stop offset="0" stop-color="#5c9bbb"/><stop offset="1" stop-color="#366cbd"/></linearGradient></defs><circle cx="30" cy="30.8" r="24.1" fill="url(#gbld)"/><g stroke="#142a50" stroke-width="3.4" fill="none"><line x1="14" y1="8.4" x2="27.2" y2="19.9"/><line x1="40.8" y1="31.9" x2="54" y2="43.5"/><circle cx="34" cy="25.9" r="9.1" stroke-width="3.6"/></g></svg>
<div class="t " style="left:53.5px;top:706.2px;font-size:22px;line-height:22px;color:#fff;font-weight:700;">Builds</div>
<svg class="r" style="left:55px;top:810px;" width="62" height="62" viewBox="0 0 62 62" ><defs><linearGradient id="gff" x1="0.2" y1="0" x2="0.8" y2="1"><stop offset="0" stop-color="#a38b45"/><stop offset="1" stop-color="#8c5546"/></linearGradient></defs><rect x="8.1" y="8.3" width="45" height="45" rx="9" transform="rotate(9 30.6 30.8)" fill="url(#gff)"/><g fill="none" stroke="#142a50" stroke-width="4" stroke-linejoin="round"><path d="M15 28.5 L27.5 54"/><path d="M15 28.5 C19 23 28 24.5 38.4 19.5 L46 33 C38 37.5 30 33 23.5 37.5"/></g></svg>
<div class="t " style="left:15.4px;top:890.2px;font-size:22px;line-height:22px;color:#fff;font-weight:700;">Feature Flags</div>
<svg class="r" style="left:70px;top:984px;" width="32" height="22" viewBox="0 0 32 22" ><path d="M3 2 L29 2 Q31 2 30 4 L17.5 20 Q16 22 14.5 20 L2 4 Q1 2 3 2Z" fill="#44587c"/></svg>
<div class="r" style="left:48px;top:1027px;width:76px;height:60px;box-sizing:border-box;border:2px solid #3a5a90;border-top:none;border-radius:0 0 8px 8px;background:#142a50"></div>
<svg class="r" style="left:74px;top:1046px;" width="24" height="24" viewBox="0 0 24 24" ><rect x="0.0" y="0.0" width="7" height="7" rx="0.8" fill="#a3a8c0"/><rect x="8.5" y="0.0" width="7" height="7" rx="0.8" fill="#a3a8c0"/><rect x="17.0" y="0.0" width="7" height="7" rx="0.8" fill="#a3a8c0"/><rect x="0.0" y="8.5" width="7" height="7" rx="0.8" fill="#a3a8c0"/><rect x="8.5" y="8.5" width="7" height="7" rx="0.8" fill="#a3a8c0"/><rect x="17.0" y="8.5" width="7" height="7" rx="0.8" fill="#a3a8c0"/><rect x="0.0" y="17.0" width="7" height="7" rx="0.8" fill="#a3a8c0"/><rect x="8.5" y="17.0" width="7" height="7" rx="0.8" fill="#a3a8c0"/><rect x="17.0" y="17.0" width="7" height="7" rx="0.8" fill="#a3a8c0"/></svg>
<svg class="r" style="left:69px;top:1176px;" width="40" height="34" viewBox="0 0 40 34" ><path d="M4 1 H25 Q28 1 28 4 V17 Q28 20 25 20 H10 L5 25 V20 H4 Q1 20 1 17 V4 Q1 1 4 1Z" fill="#8e9ab8"/><text x="14.5" y="16.5" font-family="Liberation Sans" font-weight="700" font-size="17" fill="#17305e" text-anchor="middle">?</text><path d="M31.5 11.5 H34 Q36 11.5 36 13.5 V27 Q36 29 34 29 V32.5 L30.5 29 H14.3 Q12.3 29 12.3 27 V24.5" fill="none" stroke="#8e9ab8" stroke-width="2.6" stroke-linejoin="round"/></svg>
<div class="t " style="left:61.0px;top:1219.5px;font-size:19px;line-height:19px;color:#a3aec8;font-weight:400;">HELP</div>
<svg class="r" style="left:71px;top:1330px;" width="30" height="30" viewBox="0 0 30 30" ><g fill="#7b8aab"><rect x="0" y="0" width="13" height="19"/><rect x="17" y="0" width="13" height="9"/><rect x="0" y="22" width="13" height="8"/><rect x="17" y="12" width="13" height="18"/></g></svg>
<div class="t " style="left:18.6px;top:1375.9px;font-size:19px;line-height:19px;color:#a3aec8;font-weight:400;">DASHBOARDS</div>
<svg class="r" style="left:68.5px;top:1472.5px" width="36" height="38" viewBox="0 0 34 34" preserveAspectRatio="none"><g fill="none" stroke="#c9cbd0" stroke-width="2.6" stroke-linejoin="round"><path d="M14.5 2 H19.5 L20.5 6.5 L24 8.5 L28.5 7 L31 11.5 L27.5 14.5 V18.5 L31 21.5 L28.5 26 L24 24.5 L20.5 26.5 L19.5 31 H14.5 L13.5 26.5 L10 24.5 L5.5 26 L3 21.5 L6.5 18.5 V14.5 L3 11.5 L5.5 7 L10 8.5 L13.5 6.5 Z"/><circle cx="17" cy="16.5" r="5"/></g></svg>
<div class="t " style="left:36.0px;top:1522.1px;font-size:20px;line-height:20px;color:#f2f3f5;font-weight:400;letter-spacing:0.2px">ACCOUNT</div>
<div class="t " style="left:37.0px;top:1548.1px;font-size:20px;line-height:20px;color:#f2f3f5;font-weight:400;letter-spacing:0.2px">SETTINGS</div>
<div class="r" style="left:62px;top:1642px;width:48px;height:48px;box-sizing:border-box;border-radius:50%;background:#5ea55a;border:4px solid #fff"></div>
<div class="t " style="left:62.0px;top:1657.1px;font-size:20.5px;line-height:20.5px;color:#fff;font-weight:700;width:48px;text-align:center">CJ</div>
<div class="r" style="left:0px;top:0px;width:3362px;height:2px;background:#dcdcdc"></div>
<div class="r" style="left:0px;top:1726px;width:542px;height:2px;background:#e6e6e6"></div>
</body></html>
